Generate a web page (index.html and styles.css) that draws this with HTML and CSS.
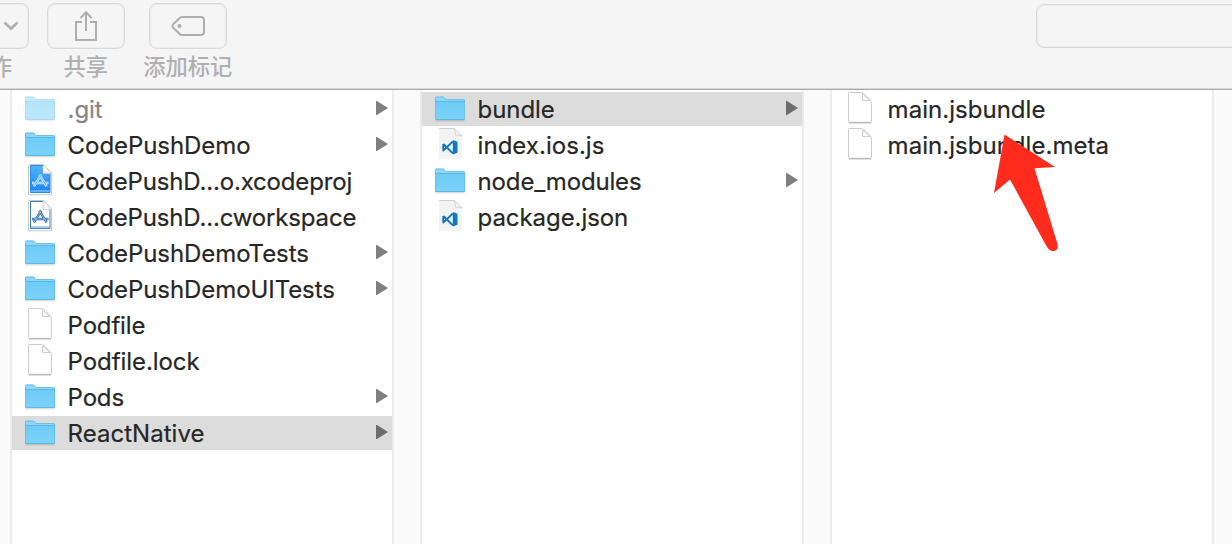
FILE: index.html
```html
<!DOCTYPE html>
<html lang="zh-CN">
<head>
<meta charset="utf-8">
<title>Finder</title>
<link rel="stylesheet" href="styles.css">
</head>
<body>
<svg class="defs" width="0" height="0">
  <defs>
    <linearGradient id="fg" x1="0" y1="0" x2="0" y2="1"><stop offset="0" stop-color="#6dcbf7"/><stop offset="1" stop-color="#7dd2f8"/></linearGradient>
    <linearGradient id="xg" x1="0" y1="0" x2="0" y2="1"><stop offset="0" stop-color="#4db5f5"/><stop offset="1" stop-color="#1b82f7"/></linearGradient>
    <symbol id="folder" viewBox="0 0 32 32">
      <path d="M1.500 27.800h29" stroke="#000" stroke-opacity=".18"/>
      <path d="M1 26V4.600Q1 3.500 2 3.500h7.500l2.500 2.500h18q1 0 1 1V26q0 1-1 1H2q-1 0-1-1z" fill="#8ed7fa"/>
      <path d="M1 9h30v17q0 1-1 1H2q-1 0-1-1z" fill="url(#fg)"/>
      <path d="M1.500 26V5Q1.500 4 2.500 4H9.500l2.500 2.500h17.500q1 0 1 1V26" fill="none" stroke="#62bce5" stroke-width=".8"/>
      <path d="M1 8.500h30M1.500 26.500h29" stroke="#57b5de" stroke-width=".9"/>
    </symbol>
    <symbol id="file" viewBox="0 0 32 32">
      <path d="M4.500 31.500h23" stroke="#000" stroke-opacity=".12"/>
      <path d="M5.500.5h11.500q2 0 4 2l5 5q1.500 1.500 1.500 4V29.500q0 .8-.8.800H5.300q-.8 0-.8-.8V1.500q0-1 1-1z" fill="#fff" stroke="#cbcbcb"/>
      <path d="M18.500 2v6.500h7.500z" fill="#fdfdfd" stroke="#c8c8c8" stroke-width=".9"/>
      <path d="M5 30.500h22" stroke="#b9b9b9"/>
    </symbol>
    <symbol id="tools" viewBox="0 0 18 15">
      <path d="M10 1.500 2.500 13.500M8 1.500l7.500 12M.5 10h17" fill="none" stroke="currentColor" stroke-width="2.500"/>
      <path d="M10 1.500 2.500 13.500M8 1.500l7.500 12M1 10h16" fill="none" stroke="var(--core)" stroke-width=".7"/>
    </symbol>
    <symbol id="xfile" viewBox="0 0 32 32">
      <path d="M4.500 1.500q0-1 1-1h14l8 8.500v21q0 .8-.8.800H5.300q-.8 0-.8-.8z" fill="#fff" stroke="#c4c8cc"/>
      <path d="M6.500 1.500h12.500l7 9v18H6.500z" fill="var(--body)" stroke="var(--edge)"/>
      <path d="M7 27h18.500" stroke="var(--line)" stroke-width=".8"/>
      <path d="M19 1v8.500h8.300L20 1z" fill="#f7f7f7" stroke="#c9c9c9" stroke-width=".8"/>
      <use href="#tools" x="7.500" y="9" width="17.500" height="15"/>
    </symbol>
    <symbol id="vs" viewBox="0 0 32 32">
      <path d="M5 0h15l8 8v23H5z" fill="#f3f3f3"/>
      <path d="M5 .5h15" stroke="#d2d2d2"/>
      <path d="M20 0h8v8z" fill="#fff"/><path d="M20 .5l8 7.500q-3-1-6.500-1 0-4-1.500-6.500" fill="#fdfdfd" stroke="#c9c9c9" stroke-width=".9"/>
      <path d="M9.300 16v6.600L18.800 13.500M9.300 16 18.800 25.300" fill="none" stroke="#1178bf" stroke-width="1.900" stroke-linejoin="round"/>
      <path d="M18.800 12 23.500 13.800V24.800L18.800 26.600z" fill="#1178bf"/>
    </symbol>
  </defs>
</svg>
<div class="window">
  <header class="toolbar">
    <div class="tool action"><span class="button"><svg width="16" height="10" viewBox="0 0 16 10"><path d="m1.500 1.500 6.500 6.300 6.500-6.300"/></svg></span><span class="caption">作</span></div>
    <div class="tool"><span class="button"><svg width="24" height="32" viewBox="0 0 24 32"><path d="M8 12H2v18h20V12h-6M12 21V2.500M6.500 8 12 2.300 17.500 8"/></svg></span><span class="caption">共享</span></div>
    <div class="tool"><span class="button"><svg width="36" height="22" viewBox="0 0 36 22"><path d="M12 2h19q3 0 3 3v12q0 3-3 3H12q-1.500 0-2.600-1.200L3 12.500q-1.300-1.500 0-3l6.400-6.300Q10.500 2 12 2z"/><circle class="dot" cx="9.500" cy="11" r="2"/></svg></span><span class="caption">添加标记</span></div>
    <div class="search"></div>
  </header>
  <main class="browser">
    <div class="gutter first"></div>
    <section class="column">
      <div class="row hidden"><svg class="icon"><use href="#folder"/></svg><span class="name">.git</span><i class="arrow"></i></div>
      <div class="row"><svg class="icon"><use href="#folder"/></svg><span class="name">CodePushDemo</span><i class="arrow"></i></div>
      <div class="row"><svg class="icon doc project"><use href="#xfile"/></svg><span class="name tight">CodePushD...o.xcodeproj</span></div>
      <div class="row"><svg class="icon doc workspace"><use href="#xfile"/></svg><span class="name tight">CodePushD...cworkspace</span></div>
      <div class="row"><svg class="icon"><use href="#folder"/></svg><span class="name">CodePushDemoTests</span><i class="arrow"></i></div>
      <div class="row"><svg class="icon"><use href="#folder"/></svg><span class="name">CodePushDemoUITests</span><i class="arrow"></i></div>
      <div class="row"><svg class="icon doc"><use href="#file"/></svg><span class="name tight">Podfile</span></div>
      <div class="row"><svg class="icon doc"><use href="#file"/></svg><span class="name">Podfile.lock</span></div>
      <div class="row"><svg class="icon"><use href="#folder"/></svg><span class="name tight">Pods</span><i class="arrow"></i></div>
      <div class="row selected"><svg class="icon"><use href="#folder"/></svg><span class="name loose">ReactNative</span><i class="arrow"></i></div>
    </section>
    <div class="gutter"></div>
    <section class="column">
      <div class="row selected"><svg class="icon"><use href="#folder"/></svg><span class="name">bundle</span><i class="arrow"></i></div>
      <div class="row"><svg class="icon doc"><use href="#vs"/></svg><span class="name loose">index.ios.js</span></div>
      <div class="row"><svg class="icon"><use href="#folder"/></svg><span class="name tight">node_modules</span><i class="arrow"></i></div>
      <div class="row"><svg class="icon doc"><use href="#vs"/></svg><span class="name">package.json</span></div>
    </section>
    <div class="gutter"></div>
    <section class="column">
      <div class="row"><svg class="icon doc"><use href="#file"/></svg><span class="name loose">main.jsbundle</span></div>
      <div class="row"><svg class="icon doc"><use href="#file"/></svg><span class="name loose">main.jsbundle.meta</span></div>
    </section>
    <div class="gutter last"></div>
  </main>
  <svg class="pointer" width="64" height="120" viewBox="0 0 64 120"><path fill="#ff2b1c" d="M11.500 1.500 62 34l-20.500 1.300L64.200 110c1.500 6-1 8-4 8-3 0-5-2-6.500-4.500L17 46.500 1 60z"/></svg>
</div>
</body>
</html>
```
FILE: styles.css
```css
* { box-sizing: border-box; }
body { margin: 0; font-family: Inter, "Noto Sans CJK SC", sans-serif; color: #262626; }
.defs { position: absolute; }
.window { position: relative; width: 1232px; height: 544px; overflow: hidden; background: #fff; display: flex; flex-direction: column; }
.toolbar { flex: none; height: 90px; padding-top: 3px; background: #f5f5f5; border-bottom: 1px solid #a9a9a9; box-shadow: inset 0 -1px #d8d8d8; display: flex; align-items: flex-start; }
.tool { width: 78px; margin-right: 24px; display: flex; flex-direction: column; align-items: center; }
.tool.action { margin-left: -49px; margin-right: 18px; }
.button { width: 78px; height: 46px; border: 1px solid #d9d9d9; box-shadow: inset 0 0 0 1px #ececec; border-radius: 8px; display: flex; align-items: center; justify-content: center; }
.action .button { padding-left: 41px; }
.button svg { fill: none; stroke: #aeaeae; stroke-width: 2; }
.action svg { stroke-width: 2.6; }
.button .dot { fill: #aeaeae; stroke: none; }
.caption { font: 500 22.3px/32px "Noto Sans CJK SC", sans-serif; color: #b0b0b0; white-space: nowrap; margin-top: -.5px; margin-left: -.5px; }
.action .caption { margin-left: 22px; }
.search { width: 240px; height: 44px; flex: none; margin: 1px 0 0 785px; border: 1px solid #d9d9d9; box-shadow: inset 0 0 0 1px #ececec; border-radius: 8px; }
.browser { flex: 1; display: flex; }
.column { width: 380px; flex: none; padding-top: 2px; display: flex; flex-direction: column; gap: 2px; }
.gutter { width: 30px; flex: none; background: #fafafa; border: solid #ebebeb; border-width: 0 2px; }
.gutter.first { width: 12px; border-left: 0; }
.gutter.last { width: 20px; border-right: 0; }
.row { height: 34px; padding: 0 4px 0 12px; display: flex; align-items: center; }
.selected { background: #dcdcdc; }
.icon { width: 32px; height: 32px; flex: none; margin-right: 11.6px; }
.doc { margin-top: -1px; margin-bottom: 1px; }
.hidden .icon { opacity: .5; }
.hidden .name { color: #858585; }
.project { --body: url(#xg); --edge: #258be9; --line: #d9efff; --core: #459fe9; color: #d3edff; }
.workspace { --body: #fff; --edge: #3f7fb8; --line: #3f7fb8; --core: #c4dced; color: #2e6da6; }
.name { font-size: 24px; line-height: 34px; padding-top: 2px; white-space: nowrap; letter-spacing: -.07px; -webkit-text-stroke: .2px; }
.tight { letter-spacing: -.16px; }
.loose { letter-spacing: .03px; }
.arrow { width: 12px; height: 14px; margin-left: auto; margin-top: -2px; background: #7f7f7f; clip-path: polygon(0 0, 8% 0, 100% 50%, 8% 100%, 0 100%); }
.selected .arrow { background: #6d6d6d; }
.pointer { position: absolute; left: 993px; top: 133px; overflow: visible; }
```
